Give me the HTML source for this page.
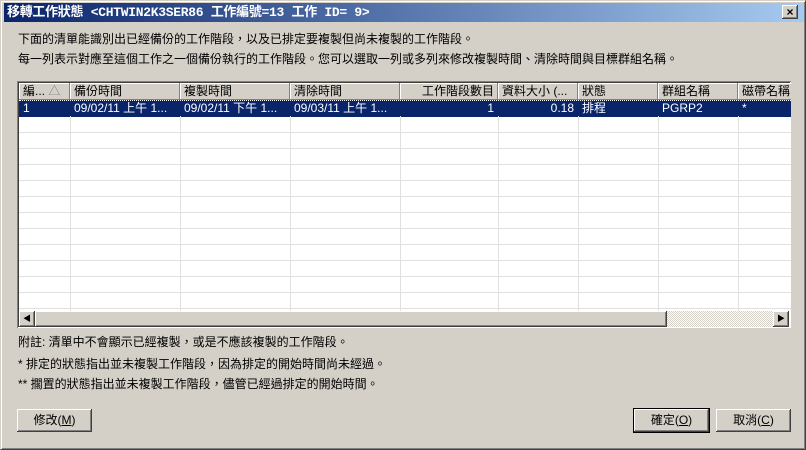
<!DOCTYPE html>
<html><head><meta charset="utf-8"><style>
body{margin:0;width:806px;height:450px;background:#d4d0c8;font-family:"Liberation Sans","Noto Sans CJK TC",sans-serif;font-size:12px;position:relative;overflow:hidden}
.win{position:absolute;left:0;top:0;width:804px;height:448px;border:1px solid;border-color:#d4d0c8 #404040 #404040 #d4d0c8;box-shadow:inset 1px 1px #fff,inset -1px -1px #808080}
.title{position:absolute;left:3px;top:2px;width:800px;height:19px;background:linear-gradient(90deg,#0a246a,#a6caf0);color:#fff;font-weight:bold;font-size:13px;line-height:19px;padding-left:3px;box-sizing:border-box;font-family:"Liberation Mono","Noto Sans CJK TC",monospace;letter-spacing:-0.3px}
.x{position:absolute;right:7px;top:4px;width:16px;height:14px;background:#d4d0c8;box-shadow:inset -1px -1px #404040,inset 1px 1px #fff,inset -2px -2px #808080;font-size:12px;line-height:14px;text-align:center;color:#000;font-weight:bold}
.t{position:absolute;left:18px;white-space:nowrap}
.list{position:absolute;left:17px;top:81px;width:774px;height:247px;background:#fff;box-shadow:inset 1px 1px #808080,inset -1px -1px #fff,inset 2px 2px #404040;overflow:hidden}
.hd{position:absolute;top:2px;height:17px;background:#d4d0c8;box-shadow:inset -1px -1px #808080,inset 1px 1px #fff;line-height:17px;padding:0 4px;box-sizing:border-box;white-space:nowrap;overflow:hidden}
.sel{position:absolute;left:2px;top:19px;width:772px;height:16px;background:#0a246a;border-top:1px dotted #fff}
.c{position:absolute;color:#fff;top:20px;line-height:15px;white-space:nowrap}
.vl{position:absolute;top:35px;width:1px;height:195px;background:#e0e0e0}
.hl{position:absolute;left:2px;width:772px;height:1px;background:#e0e0e0}
.sb{position:absolute;left:2px;top:230px;width:770px;height:16px;background:repeating-conic-gradient(#fff 0 25%,#d4d0c8 0 50%) 0 0/2px 2px}
.btn{position:absolute;height:23px;background:#d4d0c8;box-shadow:inset -1px -1px #404040,inset 1px 1px #fff,inset -2px -2px #808080;text-align:center;line-height:23px}
</style></head><body><div class="win">
<div class="title">移轉工作狀態 &lt;CHTWIN2K3SER86 工作編號=13 工作 ID= 9&gt;</div>
<div class="x">×</div>
</div>
<div class="t" style="top:30px">下面的清單能識別出已經備份的工作階段，以及已排定要複製但尚未複製的工作階段。</div>
<div class="t" style="top:50px">每一列表示對應至這個工作之一個備份執行的工作階段。您可以選取一列或多列來修改複製時間、清除時間與目標群組名稱。</div>
<div class="list">
<div class="hd" style="left:2px;width:51px">編... <span style="color:#808080">△</span></div>
<div class="hd" style="left:53px;width:110px">備份時間</div>
<div class="hd" style="left:163px;width:110px">複製時間</div>
<div class="hd" style="left:273px;width:110px">清除時間</div>
<div class="hd" style="left:383px;width:98px;text-align:right">工作階段數目</div>
<div class="hd" style="left:481px;width:80px">資料大小 (...</div>
<div class="hd" style="left:561px;width:80px">狀態</div>
<div class="hd" style="left:641px;width:80px">群組名稱</div>
<div class="hd" style="left:721px;width:60px">磁帶名稱</div>
<div class="sel"></div>
<div class="c" style="left:6px">1</div>
<div class="c" style="left:57px">09/02/11 上午 1...</div>
<div class="c" style="left:167px">09/02/11 下午 1...</div>
<div class="c" style="left:277px">09/03/11 上午 1...</div>
<div class="c" style="left:383px;width:94px;text-align:right">1</div>
<div class="c" style="left:481px;width:76px;text-align:right">0.18</div>
<div class="c" style="left:565px">排程</div>
<div class="c" style="left:645px">PGRP2</div>
<div class="c" style="left:725px">*</div>
<div class="vl" style="left:53px"></div><div class="vl" style="left:163px"></div><div class="vl" style="left:273px"></div><div class="vl" style="left:383px"></div><div class="vl" style="left:481px"></div><div class="vl" style="left:561px"></div><div class="vl" style="left:641px"></div><div class="vl" style="left:721px"></div>
<div class="hl" style="top:51px"></div><div class="hl" style="top:67px"></div><div class="hl" style="top:83px"></div><div class="hl" style="top:99px"></div><div class="hl" style="top:115px"></div><div class="hl" style="top:131px"></div><div class="hl" style="top:147px"></div><div class="hl" style="top:163px"></div><div class="hl" style="top:179px"></div><div class="hl" style="top:195px"></div><div class="hl" style="top:211px"></div><div class="hl" style="top:227px"></div>
<div class="sb">
<div class="btn" style="left:0;top:0;width:16px;height:16px;line-height:16px;font-size:8px">◀</div>
<div class="btn" style="left:16px;top:0;width:632px;height:16px"></div>
<div class="btn" style="left:754px;top:0;width:16px;height:16px;line-height:16px;font-size:8px">▶</div>
</div>
</div>
<div class="t" style="top:333px">附註: 清單中不會顯示已經複製，或是不應該複製的工作階段。</div>
<div class="t" style="top:355px">*  排定的狀態指出並未複製工作階段，因為排定的開始時間尚未經過。</div>
<div class="t" style="top:375px">** 擱置的狀態指出並未複製工作階段，儘管已經過排定的開始時間。</div>
<div class="btn" style="left:17px;top:409px;width:75px">修改(<u>M</u>)</div>
<div class="btn" style="left:634px;top:409px;width:75px;outline:1px solid #000">確定(<u>O</u>)</div>
<div class="btn" style="left:716px;top:409px;width:75px">取消(<u>C</u>)</div>
</body></html>
